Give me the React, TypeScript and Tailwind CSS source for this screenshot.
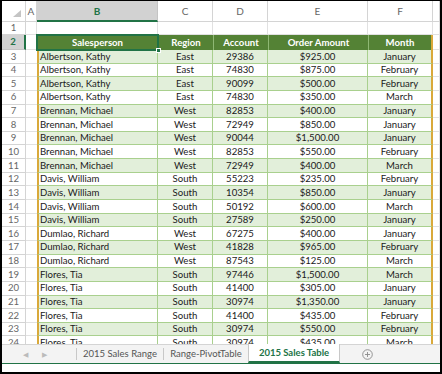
import React from "react";

const rows: [string, string, string, string, string][] = [
  ["Albertson, Kathy", "East", "29386", "$925.00", "January"],
  ["Albertson, Kathy", "East", "74830", "$875.00", "February"],
  ["Albertson, Kathy", "East", "90099", "$500.00", "February"],
  ["Albertson, Kathy", "East", "74830", "$350.00", "March"],
  ["Brennan, Michael", "West", "82853", "$400.00", "January"],
  ["Brennan, Michael", "West", "72949", "$850.00", "January"],
  ["Brennan, Michael", "West", "90044", "$1,500.00", "January"],
  ["Brennan, Michael", "West", "82853", "$550.00", "February"],
  ["Brennan, Michael", "West", "72949", "$400.00", "March"],
  ["Davis, William", "South", "55223", "$235.00", "February"],
  ["Davis, William", "South", "10354", "$850.00", "January"],
  ["Davis, William", "South", "50192", "$600.00", "March"],
  ["Davis, William", "South", "27589", "$250.00", "January"],
  ["Dumlao, Richard", "West", "67275", "$400.00", "January"],
  ["Dumlao, Richard", "West", "41828", "$965.00", "February"],
  ["Dumlao, Richard", "West", "87543", "$125.00", "March"],
  ["Flores, Tia", "South", "97446", "$1,500.00", "March"],
  ["Flores, Tia", "South", "41400", "$305.00", "January"],
  ["Flores, Tia", "South", "30974", "$1,350.00", "January"],
  ["Flores, Tia", "South", "41400", "$435.00", "February"],
  ["Flores, Tia", "South", "30974", "$550.00", "February"],
  ["Flores, Tia", "South", "30974", "$435.00", "March"],
];

const cols = "grid grid-cols-[24px_11px_121px_55px_55px_100px_65px_1fr]";
const grid = "border-r border-b border-[#e1e1e1]";
const tcell = "border-r border-b border-[#a9d08e] flex items-center justify-center";

export default function App() {
  return (
    <div
      className="w-[442px] h-[374px] bg-black pt-px pb-[2px] px-[2px] overflow-hidden"
      style={{ fontFamily: "Lato, 'Open Sans', sans-serif" }}
    >
      <div className="w-full h-full bg-white flex flex-col text-[9.6px] leading-none">
        {/* column headers */}
        <div className={`${cols} h-[21px] shrink-0 text-[#666] text-[10px]`}>
          <div className="border-r border-b border-[#d4d4d4] relative">
            <div className="absolute right-[4px] bottom-[4px] w-0 h-0 border-l-[8px] border-l-transparent border-b-[7px] border-b-[#c4c4c4]" />
          </div>
          {["A", "B", "C", "D", "E", "F", ""].map((c) => (
            <div
              key={c}
              className={
                c === "B"
                  ? "bg-[#d2d2d2] border-r border-[#c4c4c4] border-b-2 border-b-[#217346] flex items-center justify-center font-bold text-[#217346]"
                  : "border-r border-b border-[#d4d4d4] flex items-center justify-center"
              }
            >
              {c}
            </div>
          ))}
        </div>

        <div className="flex-1 overflow-hidden text-[#1a1a1a]">
          {/* row 1 */}
          <div className={`${cols} h-[13px]`}>
            <div className="border-r border-b border-[#d4d4d4] flex items-center justify-center text-[#666]">1</div>
            {[0, 1, 2, 3, 4, 5, 6].map((i) => (
              <div key={i} className={grid} />
            ))}
          </div>
          {/* row 2: table header */}
          <div className={`${cols} h-[15px]`}>
            <div className="bg-[#d2d2d2] border-r-2 border-r-[#217346] border-b border-b-[#c4c4c4] flex items-center justify-center font-bold text-[#217346]">
              2
            </div>
            <div className={grid} />
            <div className="relative bg-[#548235] flex items-center justify-center font-bold text-white">
              Salesperson
              <div className="absolute -inset-px border-2 border-[#217346]" />
              <div className="absolute -right-[3px] -bottom-[3px] w-[5px] h-[5px] bg-[#217346] border border-white z-10" />
            </div>
            {["Region", "Account", "Order Amount", "Month"].map((h, i) => (
              <div
                key={h}
                className={`bg-[#548235] border-l border-[#8fb874] flex items-center justify-center font-bold text-white ${
                  i === 3 ? "border-r-2 border-r-[#d9a93a]" : ""
                }`}
              >
                {h}
              </div>
            ))}
            <div className={grid} />
          </div>
          {/* data */}
          {rows.map((r, i) => {
            const bg = i % 2 === 0 ? "bg-[#e2efda]" : "bg-white";
            return (
              <div key={i} className={`${cols} h-[13.65px]`}>
                <div className="border-r border-b border-[#d4d4d4] flex items-center justify-center text-[#666]">
                  {i + 3}
                </div>
                <div className="border-b border-[#e1e1e1]" />
                <div className={`${bg} border-l-2 border-l-[#d9a93a] border-r border-b border-[#a9d08e] flex items-center pl-[1px]`}>
                  {r[0]}
                </div>
                <div className={`${bg} ${tcell}`}>{r[1]}</div>
                <div className={`${bg} ${tcell}`}>{r[2]}</div>
                <div className={`${bg} ${tcell}`}>{r[3]}</div>
                <div className={`${bg} border-b border-[#a9d08e] border-r-2 border-r-[#d9a93a] flex items-center justify-center`}>
                  {r[4]}
                </div>
                <div className={grid} />
              </div>
            );
          })}
        </div>

        {/* sheet tabs */}
        <div className="h-[19px] shrink-0 bg-[#f3f3f3] border-t border-[#d4d4d4] flex items-stretch text-[9.5px] text-[#555]">
          <div className="w-[74px] flex items-center text-[7px] text-[#bbb]">
            <span className="ml-[21px]">◀</span>
            <span className="ml-[14px]">▶</span>
          </div>
          <div className="w-px my-[3px] bg-[#c8c8c8]" />
          <div className="w-[86px] flex items-center justify-center">2015 Sales Range</div>
          <div className="w-px my-[3px] bg-[#c8c8c8]" />
          <div className="w-[84px] flex items-center justify-center">Range-PivotTable</div>
          <div className="w-[92px] -mt-px bg-white border-x border-[#c8c8c8] border-b-2 border-b-[#217346] flex items-center justify-center font-bold text-[#217346]">
            2015 Sales Table
          </div>
          <div className="flex items-center ml-[22px]">
            <svg width="11" height="11" viewBox="0 0 11 11">
              <circle cx="5.5" cy="5.5" r="4.8" fill="none" stroke="#8a8a8a" strokeWidth="0.9" />
              <path d="M5.5 3v5M3 5.5h5" stroke="#8a8a8a" strokeWidth="0.9" />
            </svg>
          </div>
        </div>
        <div className="h-px shrink-0 bg-[#217346]" />
        <div className="h-[8px] shrink-0" />
      </div>
    </div>
  );
}
